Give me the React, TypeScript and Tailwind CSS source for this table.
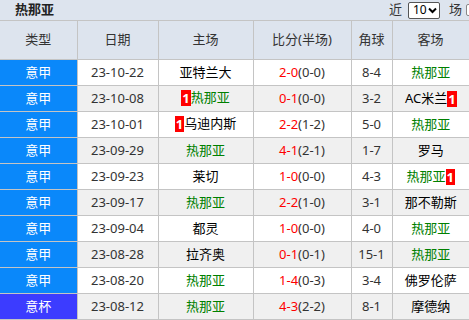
import React from "react";

type Row = {
  type: string;
  date: string;
  home: string;
  homeGreen?: boolean;
  homeRed?: string;
  score: string;
  half: string;
  corner: string;
  away: string;
  awayGreen?: boolean;
  awayRed?: string;
};

const rows: Row[] = [
  { type: "意甲", date: "23-10-22", home: "亚特兰大", score: "2-0", half: "(0-0)", corner: "8-4", away: "热那亚", awayGreen: true },
  { type: "意甲", date: "23-10-08", home: "热那亚", homeGreen: true, homeRed: "1", score: "0-1", half: "(0-0)", corner: "3-2", away: "AC米兰", awayRed: "1" },
  { type: "意甲", date: "23-10-01", home: "乌迪内斯", homeRed: "1", score: "2-2", half: "(1-2)", corner: "5-0", away: "热那亚", awayGreen: true },
  { type: "意甲", date: "23-09-29", home: "热那亚", homeGreen: true, score: "4-1", half: "(2-1)", corner: "1-7", away: "罗马" },
  { type: "意甲", date: "23-09-23", home: "莱切", score: "1-0", half: "(0-0)", corner: "4-3", away: "热那亚", awayGreen: true, awayRed: "1" },
  { type: "意甲", date: "23-09-17", home: "热那亚", homeGreen: true, score: "2-2", half: "(1-0)", corner: "3-1", away: "那不勒斯" },
  { type: "意甲", date: "23-09-04", home: "都灵", score: "1-0", half: "(0-0)", corner: "4-0", away: "热那亚", awayGreen: true },
  { type: "意甲", date: "23-08-28", home: "拉齐奥", score: "0-1", half: "(0-1)", corner: "15-1", away: "热那亚", awayGreen: true },
  { type: "意甲", date: "23-08-20", home: "热那亚", homeGreen: true, score: "1-4", half: "(0-3)", corner: "3-4", away: "佛罗伦萨" },
  { type: "意杯", date: "23-08-12", home: "热那亚", homeGreen: true, score: "4-3", half: "(2-2)", corner: "8-1", away: "摩德纳" },
];

const font = { fontFamily: '"Noto Sans", "Noto Sans CJK SC", sans-serif' };

function Badge({ n }: { n: string }) {
  return <span className="bg-[#ff0000] text-white font-bold px-[1px] leading-[16px] inline-block">{n}</span>;
}

function Team({ name, green, red, redLeft }: { name: string; green?: boolean; red?: string; redLeft?: boolean }) {
  return (
    <span className="inline-flex items-center">
      {red && redLeft && <Badge n={red} />}
      <span className={green ? "text-[#008000]" : "text-black"}>{name}</span>
      {red && !redLeft && <Badge n={red} />}
    </span>
  );
}

export default function App() {
  return (
    <div className="w-[469px] h-[320px] overflow-hidden bg-white text-[13px] text-[#333]" style={font}>
      <div className="h-[20px] bg-[#dde4ee] flex items-center justify-between pl-[15px] whitespace-nowrap">
        <span className="font-bold text-[#222]">热那亚</span>
        <div className="flex items-center shrink-0 -mr-[9px]">
          <span className="shrink-0">近</span>
          <span className="shrink-0 ml-[6px] w-[32px] min-w-[32px] h-[17px] bg-white border border-[#555] rounded-[2px] flex items-center justify-between pl-[4px] pr-[2px] text-[12px] text-black">
            <span>10</span>
            <svg width="9" height="7" viewBox="0 0 9 7"><path d="M1 1.5 L4.5 5 L8 1.5" stroke="#000" strokeWidth="2" fill="none" /></svg>
          </span>
          <span className="shrink-0 ml-[9px]">场</span>
          <span className="shrink-0 ml-[4px] w-[12px] h-[12px] border border-[#888] rounded-[2px] bg-white" />
        </div>
      </div>
      <table className="w-[469px] table-fixed border-collapse text-center">
        <colgroup>
          <col className="w-[77px]" />
          <col className="w-[81px]" />
          <col className="w-[95px]" />
          <col className="w-[98px]" />
          <col className="w-[41px]" />
          <col className="w-[77px]" />
        </colgroup>
        <thead>
          <tr className="h-[39px] bg-[#dde4ee]">
            {["类型", "日期", "主场", "比分(半场)", "角球", "客场"].map((h) => (
              <th key={h} className="font-normal border border-[#c4c4c4] border-l-0 first:border-l-0">{h}</th>
            ))}
          </tr>
        </thead>
        <tbody>
          {rows.map((r, i) => (
            <tr key={i} className={`h-[26px] ${i % 2 === 1 ? "bg-[#f0f0f0]" : "bg-white"}`}>
              <td className={`border border-[#c4c4c4] border-l-0 text-white ${r.type === "意杯" ? "bg-[#3c3cff]" : "bg-[#0a88fa]"}`}>{r.type}</td>
              <td className="border border-[#c4c4c4]">{r.date}</td>
              <td className="border border-[#c4c4c4] whitespace-nowrap">
                <Team name={r.home} green={r.homeGreen} red={r.homeRed} redLeft />
              </td>
              <td className="border border-[#c4c4c4]">
                <span className="text-[#ff0000]">{r.score}</span>
                {r.half}
              </td>
              <td className="border border-[#c4c4c4]">{r.corner}</td>
              <td className="border border-[#c4c4c4] border-r-0 whitespace-nowrap">
                <Team name={r.away} green={r.awayGreen} red={r.awayRed} />
              </td>
            </tr>
          ))}
        </tbody>
      </table>
    </div>
  );
}
